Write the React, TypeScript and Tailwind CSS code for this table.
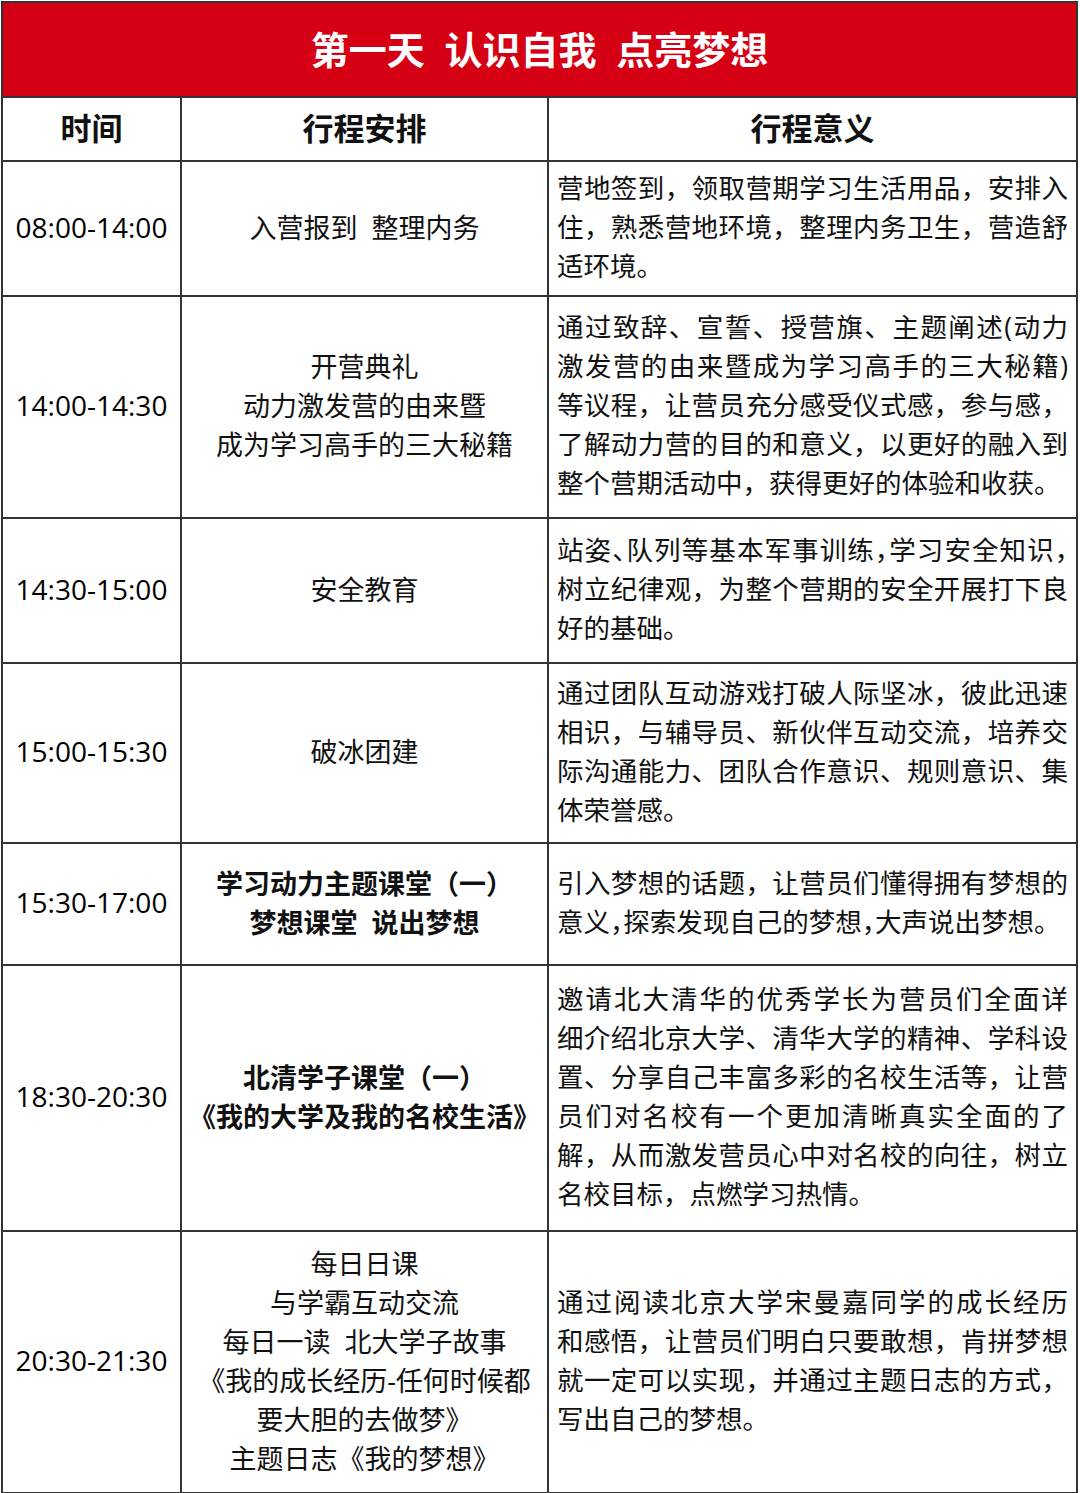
import React from 'react';

type Row = {
  time: string;
  plan: string[];
  bold?: boolean;
  meaning: string[];
  h: string;
};

const rows: Row[] = [
  {
    time: '08:00-14:00',
    plan: ['入营报到  整理内务'],
    meaning: [
      '营地签到，领取营期学习生活用品，安排入',
      '住，熟悉营地环境，整理内务卫生，营造舒',
      '适环境。',
    ],
    h: 'h-[135px]',
  },
  {
    time: '14:00-14:30',
    plan: ['开营典礼', '动力激发营的由来暨', '成为学习高手的三大秘籍'],
    meaning: [
      '通过致辞、宣誓、授营旗、主题阐述(动力',
      '激发营的由来暨成为学习高手的三大秘籍)',
      '等议程，让营员充分感受仪式感，参与感，',
      '了解动力营的目的和意义，以更好的融入到',
      '整个营期活动中，获得更好的体验和收获。',
    ],
    h: 'h-[222px]',
  },
  {
    time: '14:30-15:00',
    plan: ['安全教育'],
    meaning: [
      '站姿、队列等基本军事训练，学习安全知识，',
      '树立纪律观，为整个营期的安全开展打下良',
      '好的基础。',
    ],
    h: 'h-[145px]',
  },
  {
    time: '15:00-15:30',
    plan: ['破冰团建'],
    meaning: [
      '通过团队互动游戏打破人际坚冰，彼此迅速',
      '相识，与辅导员、新伙伴互动交流，培养交',
      '际沟通能力、团队合作意识、规则意识、集',
      '体荣誉感。',
    ],
    h: 'h-[180px]',
  },
  {
    time: '15:30-17:00',
    plan: ['学习动力主题课堂（一）', '梦想课堂  说出梦想'],
    bold: true,
    meaning: [
      '引入梦想的话题，让营员们懂得拥有梦想的',
      '意义，探索发现自己的梦想，大声说出梦想。',
    ],
    h: 'h-[122px]',
  },
  {
    time: '18:30-20:30',
    plan: ['北清学子课堂（一）', '《我的大学及我的名校生活》'],
    bold: true,
    meaning: [
      '邀请北大清华的优秀学长为营员们全面详',
      '细介绍北京大学、清华大学的精神、学科设',
      '置、分享自己丰富多彩的名校生活等，让营',
      '员们对名校有一个更加清晰真实全面的了',
      '解，从而激发营员心中对名校的向往，树立',
      '名校目标，点燃学习热情。',
    ],
    h: 'h-[266px]',
  },
  {
    time: '20:30-21:30',
    plan: [
      '每日日课',
      '与学霸互动交流',
      '每日一读  北大学子故事',
      '《我的成长经历-任何时候都',
      '要大胆的去做梦》',
      '主题日志《我的梦想》',
    ],
    meaning: [
      '通过阅读北京大学宋曼嘉同学的成长经历',
      '和感悟，让营员们明白只要敢想，肯拼梦想',
      '就一定可以实现，并通过主题日志的方式，',
      '写出自己的梦想。',
    ],
    h: 'h-[261px]',
  },
];

// lines that are too long for the cell get half-width punctuation
function lineClass(line: string, isLast: boolean) {
  const tight = line.length >= 20 ? "[font-feature-settings:'halt']" : '';
  const align = isLast ? 'text-left' : 'text-justify [text-align-last:justify]';
  return `whitespace-nowrap ${align} ${tight}`;
}

export default function App() {
  return (
    <div className="min-h-[1493px] bg-white font-['Open_Sans','Noto_Sans_CJK_SC',sans-serif] text-[#111]">
      <div className="ml-[1px] mt-[1px] w-[1077px] border-2 border-[#333]">
        <div className="flex h-[93px] items-center justify-center bg-[#d50014] text-[38px] font-bold text-white">
          第一天&nbsp;&nbsp;认识自我&nbsp;&nbsp;点亮梦想
        </div>
        <table className="w-full table-fixed border-collapse">
          <colgroup>
            <col className="w-[178px]" />
            <col className="w-[367px]" />
            <col />
          </colgroup>
          <thead>
            <tr className="h-[64px] text-[31px] font-bold">
              <th className="border-2 border-l-0 border-[#333] pb-[2px]">时间</th>
              <th className="border-2 border-[#333] pb-[2px]">行程安排</th>
              <th className="border-2 border-r-0 border-[#333] pb-[2px]">行程意义</th>
            </tr>
          </thead>
          <tbody>
            {rows.map((row, i) => {
              const last = i === rows.length - 1 ? 'border-b-0' : '';
              return (
                <tr key={row.time} className={`${row.h} leading-[39px]`}>
                  <td className={`border-2 border-l-0 border-[#333] pb-[3px] text-center text-[28px] text-black ${last}`}>
                    {row.time}
                  </td>
                  <td
                    className={`border-2 border-[#333] pb-[3px] text-center text-[27px] ${row.bold ? 'font-bold' : ''} ${last}`}
                  >
                    {row.plan.map((line) => (
                      <div key={line} className="whitespace-pre">
                        {line}
                      </div>
                    ))}
                  </td>
                  <td className={`border-2 border-r-0 border-[#333] px-[8px] pb-[3px] text-[26.5px] ${last}`}>
                    {row.meaning.map((line, j) => (
                      <div key={line} className={lineClass(line, j === row.meaning.length - 1)}>
                        {line}
                      </div>
                    ))}
                  </td>
                </tr>
              );
            })}
          </tbody>
        </table>
      </div>
    </div>
  );
}
